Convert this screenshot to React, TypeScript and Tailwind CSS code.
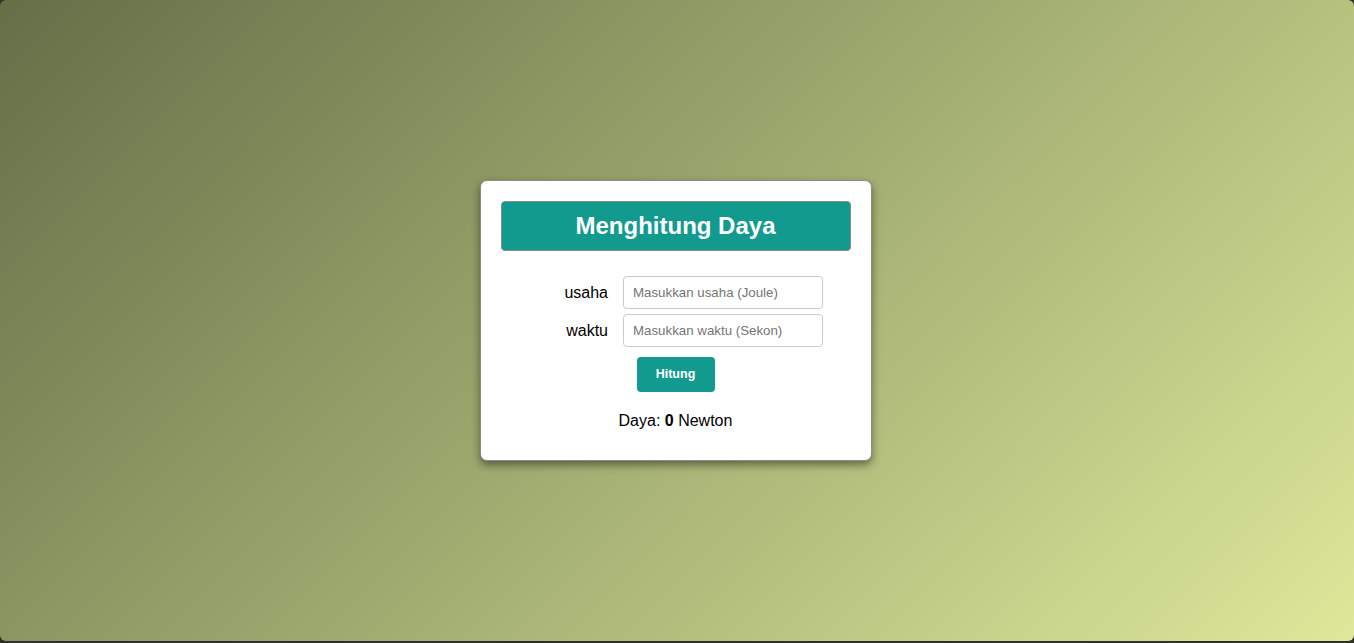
export default function App() {
  return (
    <div className="h-[643px] w-full bg-[#2f2f2f] font-['Liberation_Sans',Arial,sans-serif]">
      <div className="flex h-[641px] w-full items-center justify-center rounded-[6px] bg-[linear-gradient(135deg,#646f48,#dde89a)]">
        <div className="mr-[3px] w-[392px] rounded-[7px] border border-[#8a8a8a] bg-white px-5 pt-5 pb-[27px] shadow-[0_4px_8px_rgba(0,0,0,0.45)]">
          <div className="flex h-[50px] items-center justify-center rounded-[4px] border border-[#7f8f87] bg-[#139a8f]">
            <h1 className="text-[24px] font-bold text-white">Menghitung Daya</h1>
          </div>

          <div className="mt-[25px] flex flex-col items-center">
            <div className="grid grid-cols-[80px_200px] items-center gap-x-[15px] gap-y-[5px]">
              <label className="text-right text-[16px] text-black">usaha</label>
              <input
                type="text"
                placeholder="Masukkan usaha (Joule)"
                className="h-[33px] w-[200px] rounded-[4px] border border-[#cccccc] px-[9px] text-[13.3px] placeholder:text-[#757575] outline-none"
              />
              <label className="text-right text-[16px] text-black">waktu</label>
              <input
                type="text"
                placeholder="Masukkan waktu (Sekon)"
                className="h-[33px] w-[200px] rounded-[4px] border border-[#cccccc] px-[9px] text-[13.3px] placeholder:text-[#757575] outline-none"
              />
            </div>

            <button className="mt-[10px] h-[35px] w-[78px] rounded-[4px] bg-[#139a8f] text-[12.5px] font-bold text-white">
              Hitung
            </button>

            <p className="mt-[17px] text-[16px] text-black">
              Daya: <span className="font-bold">0</span> Newton
            </p>
          </div>
        </div>
      </div>
    </div>
  );
}
